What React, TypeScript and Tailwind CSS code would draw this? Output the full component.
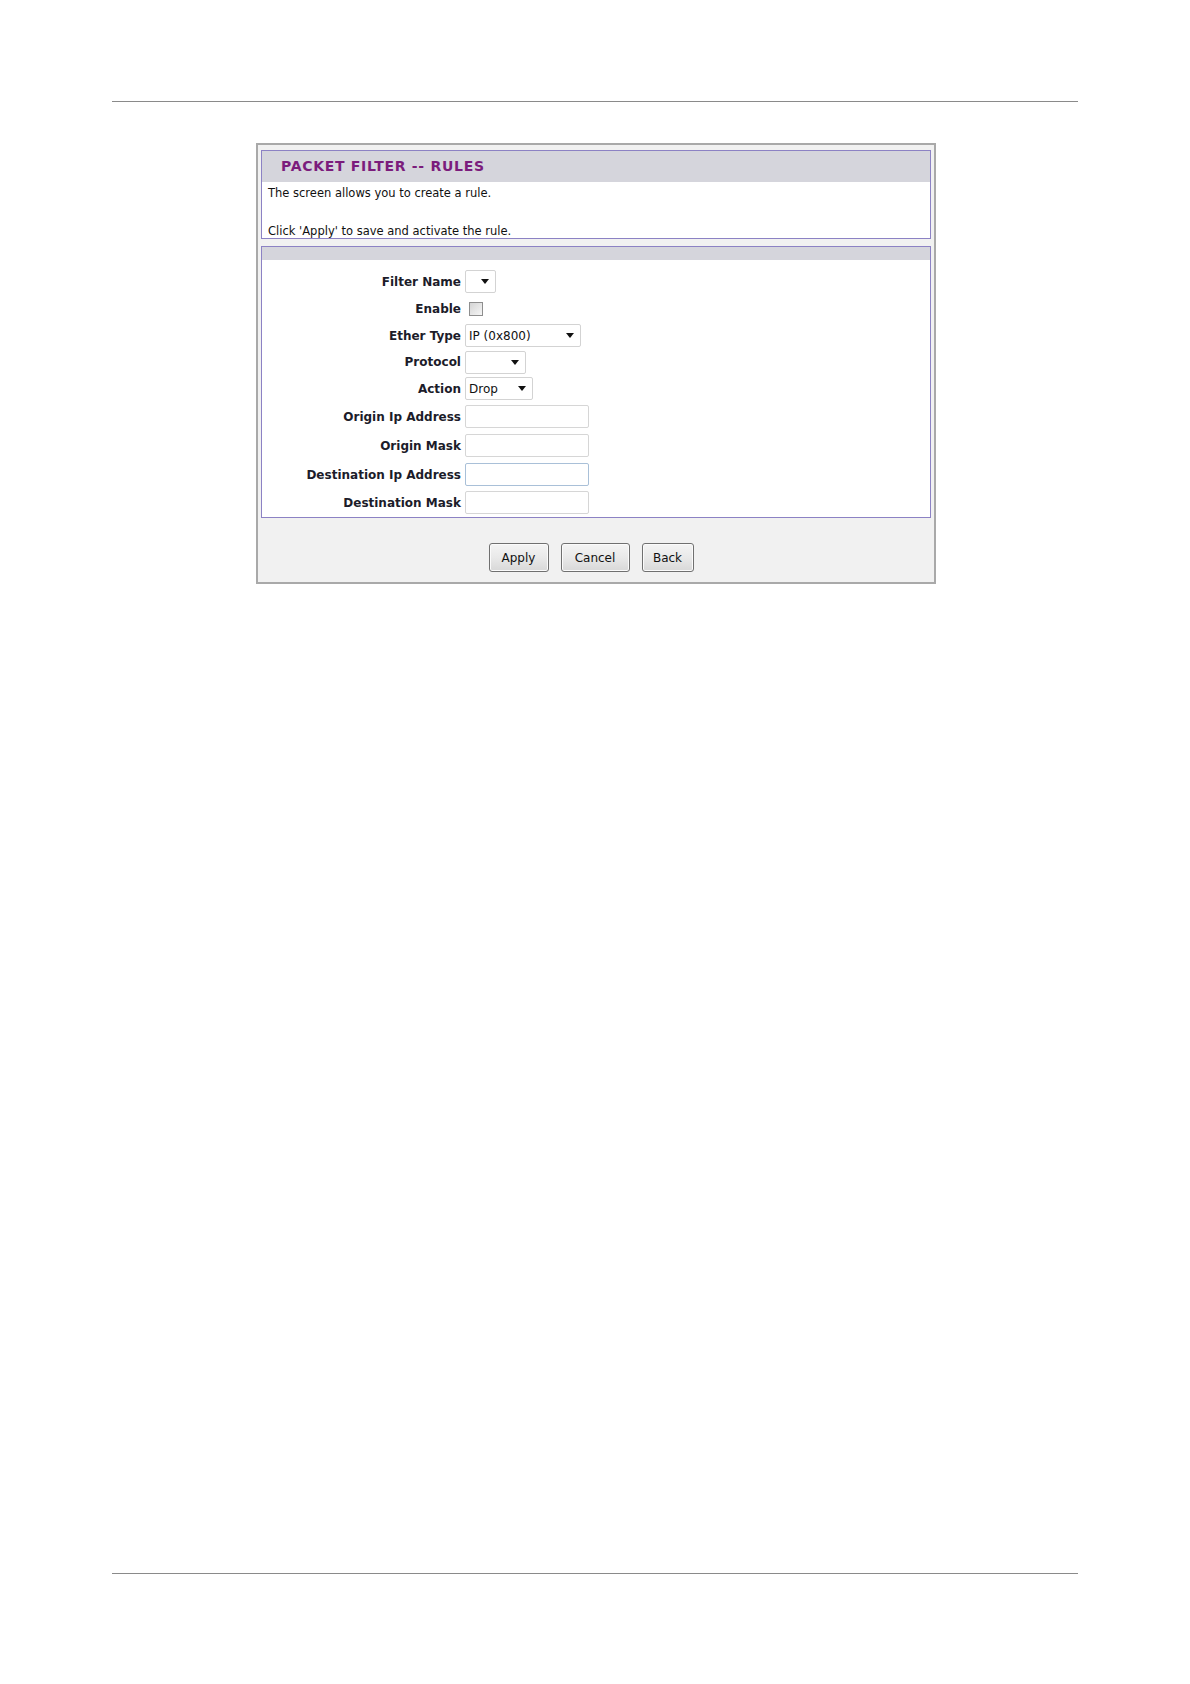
const font = "font-['DejaVu_Sans',sans-serif]";

const Arrow = () => (
  <svg width="8" height="5" viewBox="0 0 8 5" className="shrink-0">
    <path d="M0 0 L8 0 L4 5 Z" fill="#111" />
  </svg>
);

const Select = ({ width, value }: { width: string; value?: string }) => (
  <div
    className={`flex h-[23px] ${width} items-center justify-between rounded-[2px] border border-[#d3d3d3] bg-white pl-[3px] pr-[6px] text-[12px] text-[#111]`}
  >
    <span>{value ?? ""}</span>
    <Arrow />
  </div>
);

const TextBox = ({ focused }: { focused?: boolean }) => (
  <div
    className={`h-[23px] w-[124px] rounded-[2px] border bg-white ${
      focused ? "border-[#a9c0d8]" : "border-[#d6d6d6]"
    }`}
  />
);

const Row = ({ label, h, children }: { label: string; h: string; children: React.ReactNode }) => (
  <div className={`flex ${h} items-center`}>
    <div className="w-[203px] pr-[4px] text-right text-[12px] font-bold text-[#1c1c2a]">{label}</div>
    <div className="flex items-center">{children}</div>
  </div>
);

const Button = ({ label, width }: { label: string; width: string }) => (
  <button
    className={`h-[29px] ${width} rounded-[3px] border border-[#707070] bg-gradient-to-b from-[#f4f4f4] via-[#e9e9e9] to-[#d8d8d8] text-[12px] text-[#111] shadow-[inset_0_0_0_1px_#fbfbfb]`}
  >
    {label}
  </button>
);

export default function App() {
  return (
    <div className={`flex h-[1684px] w-[1190px] flex-col bg-white ${font}`}>
      <div className="mx-[112px] mt-[101px] h-px bg-[#8a8a8a]" />

      {/* Router page screenshot */}
      <div className="ml-[256px] mt-[41px] flex h-[441px] w-[680px] flex-col border-2 border-[#a9a9a9] bg-[#f1f1f1] px-[3px] pt-[5px]">
        <div className="flex h-[89px] shrink-0 flex-col border border-[#8c82c4] bg-white">
          <div className="flex h-[31px] shrink-0 items-center bg-[#d5d5dc] pl-[19px] text-[14px] font-bold tracking-[0.7px] text-[#7b1c7c]">
            PACKET FILTER -- RULES
          </div>
          <div className="flex shrink-0 flex-col pl-[6px] pt-[2px] text-[11.5px] leading-[19px] text-[#111]">
            <span>The screen allows you to create a rule.</span>
            <span>&nbsp;</span>
            <span>Click 'Apply' to save and activate the rule.</span>
          </div>
        </div>

        <div className="mt-[7px] flex h-[272px] shrink-0 flex-col border border-[#8c82c4] bg-white">
          <div className="h-[13px] shrink-0 bg-[#d5d5dc]" />
          <div className="flex flex-col pt-[8px]">
            <Row label="Filter Name" h="h-[27px]">
              <Select width="w-[31px]" />
            </Row>
            <Row label="Enable" h="h-[27px]">
              <div className="ml-[4px] h-[14px] w-[14px] border border-[#8e8e8e] bg-gradient-to-br from-[#d4d4d4] to-[#f6f6f6]" />
            </Row>
            <Row label="Ether Type" h="h-[27px]">
              <Select width="w-[116px]" value="IP (0x800)" />
            </Row>
            <Row label="Protocol" h="h-[26px]">
              <Select width="w-[61px]" />
            </Row>
            <Row label="Action" h="h-[27px]">
              <Select width="w-[68px]" value="Drop" />
            </Row>
            <Row label="Origin Ip Address" h="h-[29px]">
              <TextBox />
            </Row>
            <Row label="Origin Mask" h="h-[29px]">
              <TextBox />
            </Row>
            <Row label="Destination Ip Address" h="h-[29px]">
              <TextBox focused />
            </Row>
            <Row label="Destination Mask" h="h-[27px]">
              <TextBox />
            </Row>
          </div>
        </div>

        <div className="flex flex-1 items-start justify-center gap-[12px] pr-[10px] pt-[25px]">
          <Button label="Apply" width="w-[60px]" />
          <Button label="Cancel" width="w-[69px]" />
          <Button label="Back" width="w-[52px]" />
        </div>
      </div>

      <div className="mx-[112px] mb-[110px] mt-auto h-px bg-[#8a8a8a]" />
    </div>
  );
}
